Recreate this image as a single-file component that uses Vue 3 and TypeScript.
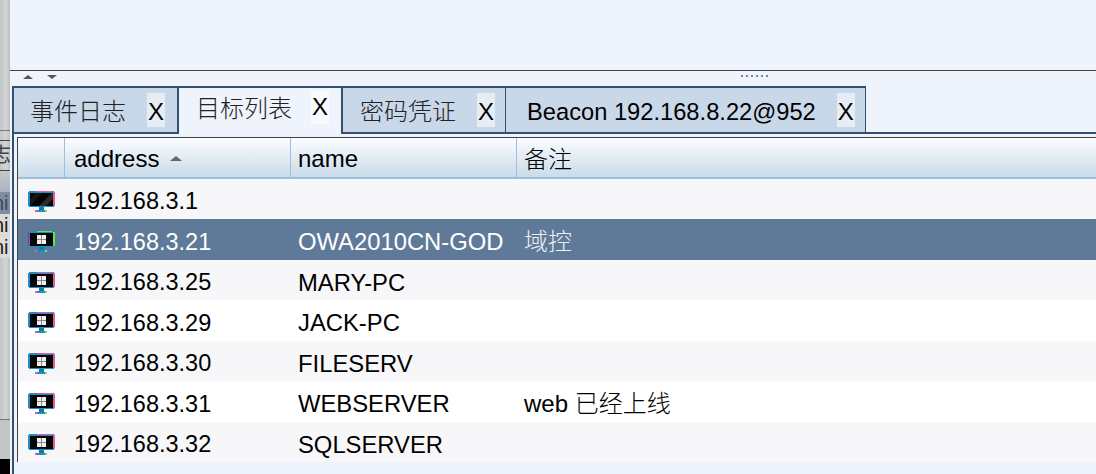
<script setup lang="ts">
interface Host { ip: string; name: string; note: string; kind: 'off' | 'on' }

const hosts: Host[] = [
  { ip: '192.168.3.1', name: '', note: '', kind: 'off' },
  { ip: '192.168.3.21', name: 'OWA2010CN-GOD', note: '域控', kind: 'on' },
  { ip: '192.168.3.25', name: 'MARY-PC', note: '', kind: 'on' },
  { ip: '192.168.3.29', name: 'JACK-PC', note: '', kind: 'on' },
  { ip: '192.168.3.30', name: 'FILESERV', note: '', kind: 'on' },
  { ip: '192.168.3.31', name: 'WEBSERVER', note: 'web 已经上线', kind: 'on' },
  { ip: '192.168.3.32', name: 'SQLSERVER', note: '', kind: 'on' },
]
const tabs = [
  { label: '事件日志', cls: 'first' },
  { label: '目标列表', cls: 'active' },
  { label: '密码凭证', cls: 'third' },
  { label: 'Beacon 192.168.8.22@952', cls: 'last' },
]
</script>

<template>
  <div class="page">
    <aside class="strip">
      <div class="s-a"></div>
      <div class="s-g"></div>
      <div class="s-tab">志</div>
      <div class="s-b"></div>
      <div class="s-sel">ni</div>
      <div class="s-row">ni</div>
      <div class="s-row">ni</div>
      <div class="s-c"></div>
      <div class="s-d"></div>
    </aside>
    <main class="main">
      <div class="top"></div>
      <div class="split">
        <span class="tri up"></span>
        <span class="tri down"></span>
        <span class="grip"></span>
      </div>
      <div class="tabs">
        <div v-for="t in tabs" :key="t.label" class="tab" :class="t.cls">
          <span class="tab-label">{{ t.label }}</span>
          <span class="tab-x">X</span>
        </div>
        <div class="tabs-rest"></div>
      </div>
      <div class="pane">
        <div class="table">
          <div class="row head">
            <div class="cell"></div>
            <div class="cell addr">address <span class="sort"></span></div>
            <div class="cell">name</div>
            <div class="cell cjk">备注</div>
          </div>
          <div
            v-for="(h, i) in hosts"
            :key="h.ip"
            class="row"
            :class="{ odd: i % 2 === 0, sel: i === 1 }"
          >
            <div class="cell icon">
              <svg width="27" height="21" viewBox="0 0 27 21">
                <rect x="1" y="0" width="25" height="16" fill="#1c8fc8" />
                <rect x="9" y="0" width="15" height="1" :fill="i === 1 ? '#58e858' : '#e85a9c'" />
                <rect x="0" y="1" width="1" height="14" :fill="i === 1 ? '#c0207c' : '#1c8fc8'" />
                <rect x="25" y="1" width="2" height="14" :fill="i === 1 ? '#58e858' : '#e85a9c'" />
                <rect x="2" y="2" width="23" height="13" fill="#060606" />
                <template v-if="h.kind === 'off'">
                  <polygon points="11,15 24,2 25,2 25,8 18,15" fill="#2c2c2c" />
                  <polygon points="2,15 2,8 8,2 14,2" fill="#161616" />
                </template>
                <template v-else>
                  <rect x="9" y="4" width="9" height="9" fill="#f0f0f0" />
                  <rect x="13" y="4" width="1" height="9" fill="#8a8a8a" />
                  <rect x="9" y="8" width="9" height="1" fill="#8a8a8a" />
                </template>
                <rect x="11" y="16" width="5" height="3" fill="#1578ad" />
                <rect x="8" y="19" width="11" height="2" fill="#1c8fc8" />
                <rect x="7" y="19" width="2" height="2" fill="#e85a9c" />
                <rect x="17" y="19" width="2" height="2" fill="#7fdc6a" />
              </svg>
            </div>
            <div class="cell latin addr">{{ h.ip }}</div>
            <div class="cell latin name">{{ h.name }}</div>
            <div class="cell cjk note">{{ h.note }}</div>
          </div>
        </div>
      </div>
    </main>
  </div>
</template>

<style>
html, body { margin: 0; overflow: hidden; }
</style>

<style scoped>
.page {
  display: flex;
  width: 1096px;
  height: 474px;
  overflow: hidden;
  background: #eff3fb;
  font-family: "Liberation Sans", "Noto Sans CJK SC", sans-serif;
  font-size: 23.5px;
  color: #000;
}
.strip {
  width: 10px;
  flex: none;
  display: flex;
  flex-direction: column;
  overflow: hidden;
  background: linear-gradient(90deg, #c4c5c7, #d4d5d6 60%, #bcbdbf);
  font-size: 20px;
  color: #222;
}
.s-a { height: 130px; border-bottom: 1px solid #777; flex: none; }
.s-g { height: 9px; border-bottom: 1px solid #444; flex: none; }
.s-tab { height: 29px; line-height: 28px; border-bottom: 1px solid #444; text-indent: -9px; color: #444; flex: none; }
.s-b { height: 21px; flex: none; background: linear-gradient(#c6c7c9, #aab2c2); }
.s-sel { height: 22px; line-height: 22px; background: #7d8da5; color: #445; text-indent: -7px; flex: none; }
.s-row { height: 22px; line-height: 22px; text-indent: -7px; background: #dcdbd8; flex: none; }
.s-c { height: 161px; flex: none; border-bottom: 1px solid #777; }
.s-d { flex: 1; background: linear-gradient(#c4c5c7 0 39px, #000 39px); }
.main { flex: 1; min-width: 0; display: flex; flex-direction: column; }
.top { height: 70px; border-bottom: 1px solid #444; flex: none; }
.split {
  height: 15px;
  flex: none;
  display: flex;
  align-items: center;
  padding: 0 0 4px 13px;
  box-sizing: border-box;
}
.tri { width: 0; height: 0; border-left: 5px solid transparent; border-right: 5px solid transparent; }
.tri.up { border-bottom: 4px solid #555; }
.tri.down { border-top: 4px solid #555; margin-left: 14px; }
.grip {
  margin-left: 684px;
  width: 27px;
  height: 3px;
  background-image: radial-gradient(circle at 1px 1px, #77839a 1px, transparent 1.2px);
  background-size: 5px 3px;
}
.tabs {
  height: 48px;
  flex: none;
  display: flex;
  padding-left: 2px;
  box-sizing: border-box;
}
.tab {
  box-sizing: border-box;
  display: flex;
  align-items: center;
  background: #c9d8e9;
  border-top: 2px solid #34506f;
  border-bottom: 2px solid #34506f;
  border-right: 1px solid #34506f;
}
.tab-label {
  font-family: "Noto Sans CJK SC", "Liberation Sans", sans-serif;
  font-weight: 300;
  color: #222;
  font-size: 24px;
  padding-bottom: 1px;
}
.tab.last .tab-label {
  font-family: "Liberation Sans", sans-serif;
  font-weight: 400;
  font-size: 23.7px;
  color: #000;
  padding: 4px 0 0;
}
.tab-x {
  font-size: 24px;
  color: #000;
  background: #e6edf5;
  padding: 6px 1px 2px;
  line-height: 26px;
  margin-left: 21px;
}
.tab.first { width: 167px; border-left: 2px solid #34506f; border-right: 2px solid #34506f; padding-left: 16px; }
.tab.active {
  width: 164px;
  background: #eff3fb;
  border-bottom: none;
  border-right: 2px solid #34506f;
  padding: 0 0 9px 17px;
}
.tab.active .tab-x { background: #f8fafd; margin-left: 19px; padding: 4px 1px; }
.tab.third { width: 163px; padding-left: 17px; }
.tab.last { width: 360px; padding-left: 21px; }
.tabs-rest { flex: 1; border-bottom: 2px solid #34506f; }
.pane {
  flex: 1;
  min-height: 0;
  margin-left: 2px;
  border-left: 2px solid #34506f;
  padding: 3px 0 0 3px;
}
.table { border-top: 1px solid #444; border-left: 1px solid #444; }
.row {
  display: grid;
  grid-template-columns: 47px 226px 226px 1fr;
  height: 40.5px;
  background: #fff;
}
.row.odd { background: #f7f7fa; }
.row.sel { background: #5e7a98; color: #fff; }
.head {
  height: 40.9px;
  box-sizing: border-box;
  background: linear-gradient(#fbfdff, #c9dbea);
  border-bottom: 2px solid #9dbfdd;
  font-size: 24px;
}
.head .cell { border-right: 1px solid #9dbfdd; padding-top: 3px; }
.head .cell:last-child { border-right: none; padding-top: 1px; }
.cell {
  display: flex;
  align-items: center;
  padding-left: 7px;
  white-space: nowrap;
  box-sizing: border-box;
  min-width: 0;
}
.cell.addr { padding-left: 9px; }
.latin { padding-top: 5px; }
.cell.name { font-size: 23.8px; }
.cjk { font-weight: 300; }
.note { font-size: 24px; }
.row.sel .cjk { color: #eef2f7; }
.icon { padding: 4px 0 0 10px; }
.icon svg { filter: blur(0.35px); }
.sort {
  width: 0;
  height: 0;
  margin-left: 11px;
  border-left: 6px solid transparent;
  border-right: 6px solid transparent;
  border-bottom: 5px solid #666;
}
</style>
